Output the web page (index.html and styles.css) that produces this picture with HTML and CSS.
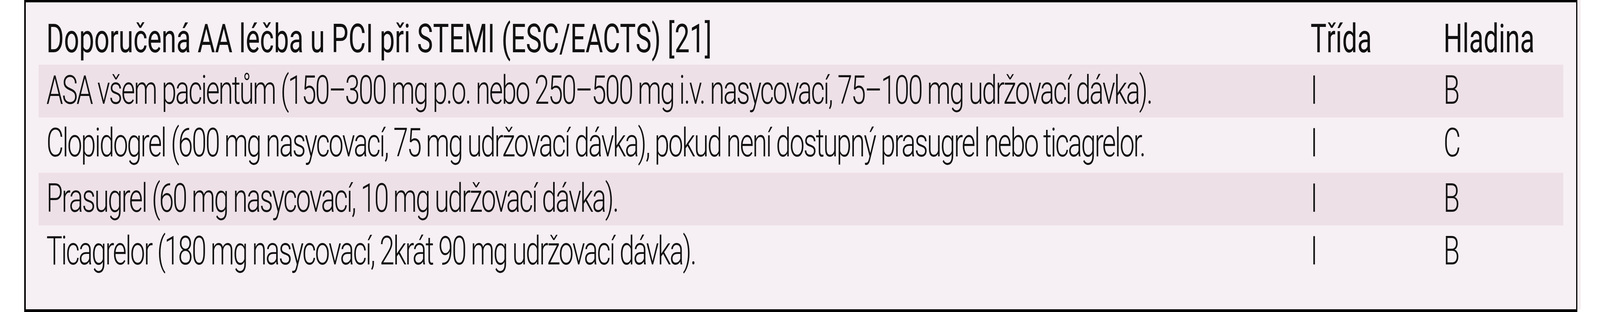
FILE: index.html
```html
<!DOCTYPE html>
<html lang="cs">
<head>
<meta charset="utf-8">
<title>Doporučená AA léčba u PCI při STEMI</title>
<link rel="stylesheet" href="styles.css">
</head>
<body>
<div class="box">
  <div class="table">
    <div class="row head">
      <div class="cell">Doporučená AA léčba u PCI při STEMI (ESC/EACTS) [21]</div>
      <div class="cell">Třída</div>
      <div class="cell">Hladina</div>
    </div>
    <div class="row shaded">
      <div class="cell">ASA všem pacientům (150–300 mg p.o. nebo 250–500 mg i.v. nasycovací, 75–100 mg udržovací dávka).</div>
      <div class="cell">I</div>
      <div class="cell">B</div>
    </div>
    <div class="row plain">
      <div class="cell">Clopidogrel (600 mg nasycovací, 75 mg udržovací dávka), pokud není dostupný prasugrel nebo ticagrelor.</div>
      <div class="cell">I</div>
      <div class="cell">C</div>
    </div>
    <div class="row shaded">
      <div class="cell">Prasugrel (60 mg nasycovací, 10 mg udržovací dávka).</div>
      <div class="cell">I</div>
      <div class="cell">B</div>
    </div>
    <div class="row plain">
      <div class="cell">Ticagrelor (180 mg nasycovací, 2krát 90 mg udržovací dávka).</div>
      <div class="cell">I</div>
      <div class="cell">B</div>
    </div>
  </div>
</div>
</body>
</html>
```
FILE: styles.css
```css
:root {
  /* one pixel of the 6105 x 800 design, horizontally and vertically */
  --px: calc(100vw / 6105);
  --py: calc(100vh / 800);
  /* vertical / horizontal ratio of the window against the design */
  --sy: tan(atan2(calc(100vh * 6105), calc(100vw * 800)));
}

html, body {
  margin: 0;
  padding: 0;
  background: #ffffff;
  overflow: hidden;
}

.box {
  box-sizing: border-box;
  margin-left: calc(92 * var(--px));
  width: calc(5926 * var(--px));
  height: calc(800 * var(--py));
  border-style: solid;
  border-color: #000000;
  border-width: calc(6 * var(--py)) calc(5 * var(--px)) calc(7 * var(--py)) calc(6 * var(--px));
  background: #f6eff3;
  box-shadow: calc(13 * var(--px)) calc(-7 * var(--py)) 0 #f5edf1;
  padding: 0 calc(49 * var(--px)) 0 calc(50 * var(--px));
  font-family: Roboto, "Liberation Sans", Arial, sans-serif;
  color: #111111;
}

.table {
  display: flex;
  flex-direction: column;
}

.row {
  box-sizing: border-box;
  display: grid;
  grid-template-columns: minmax(0, 1fr) calc(507 * var(--px)) calc(457 * var(--px));
  align-items: start;
  padding: calc(15 * var(--py)) 0 0 calc(29 * var(--px));
  font-size: calc(102 * var(--px));
  line-height: calc(102 * var(--px));
  font-weight: 300;
  letter-spacing: calc(-4.6 * var(--px));
  white-space: nowrap;
}

/* text is set to the design's widths and stretched to its height */
.cell {
  min-width: 0;
  transform: scaleY(var(--sy));
  transform-origin: 0 0;
}

.head {
  height: calc(160 * var(--py));
  padding-top: calc(43 * var(--py));
  font-weight: 400;
  letter-spacing: calc(0.1 * var(--px));
}

.shaded {
  height: calc(135 * var(--py));
  background: #ede0e6;
}

.plain {
  height: calc(142 * var(--py));
}
```
